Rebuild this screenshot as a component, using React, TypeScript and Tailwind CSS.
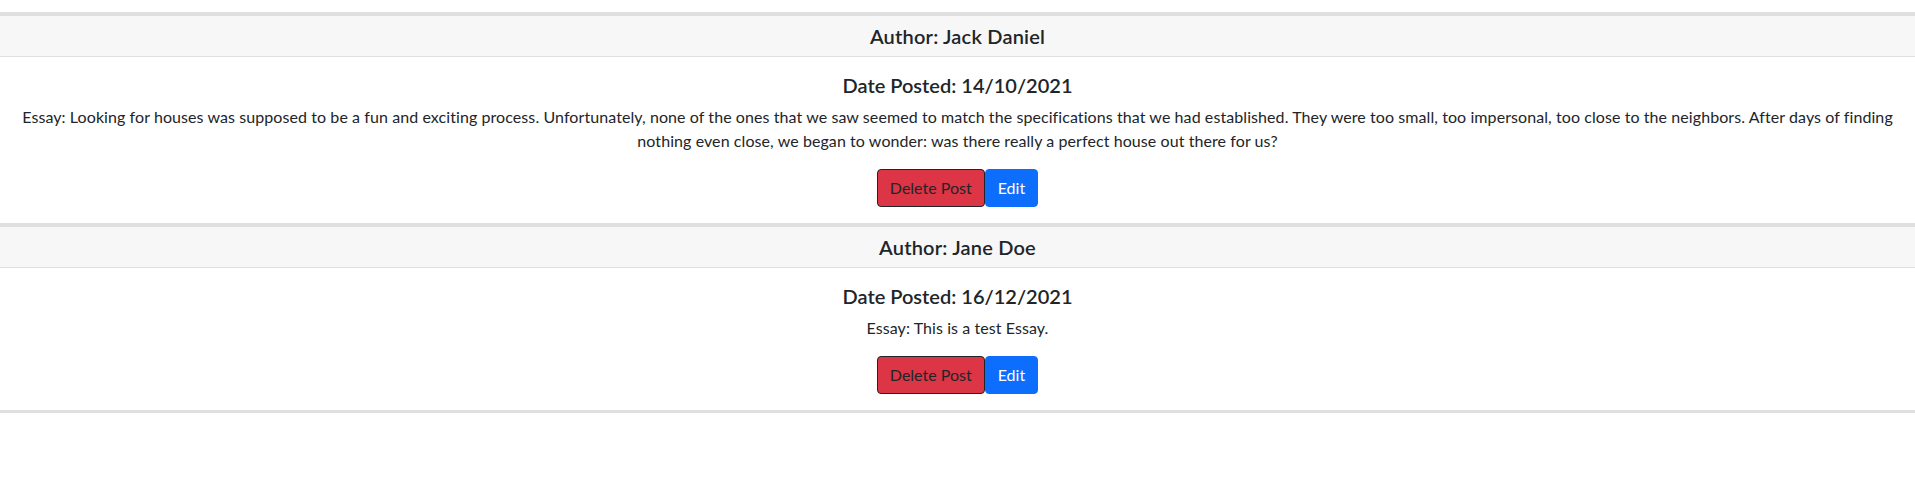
import React from "react";

type Post = { author: string; date: string; essay: string };

const posts: Post[] = [
  {
    author: "Jack Daniel",
    date: "14/10/2021",
    essay:
      "Looking for houses was supposed to be a fun and exciting process. Unfortunately, none of the ones that we saw seemed to match the specifications that we had established. They were too small, too impersonal, too close to the neighbors. After days of finding nothing even close, we began to wonder: was there really a perfect house out there for us?",
  },
  { author: "Jane Doe", date: "16/12/2021", essay: "This is a test Essay." },
];

export default function App() {
  return (
    <div className="min-h-screen bg-white pt-3 text-[#212529] font-['Lato',sans-serif]">
      <div className="border-b-[3px] border-[#dfdfdf]">
        {posts.map((p) => (
          <div key={p.author} className="border-t-4 border-[#dfdfdf] bg-white text-center">
            <div className="bg-[#f7f7f7] border-b border-[#dfdfdf] px-4 py-2">
              <h5 className="text-[20px] leading-[24px] font-semibold tracking-[0.2px]">Author: {p.author}</h5>
            </div>
            <div className="p-4">
              <h5 className="text-[20px] leading-[24px] font-semibold mb-2">Date Posted: {p.date}</h5>
              <p className="text-[16px] leading-[24px] tracking-[0.08px] mb-4">Essay: {p.essay}</p>
              <div className="flex justify-center">
                <button className="h-[38px] px-3 bg-[#dc3545] border border-[#212529] rounded text-[16px] text-[#212529]">
                  Delete Post
                </button>
                <button className="h-[38px] px-3 bg-[#0d6efd] border border-[#0d6efd] rounded text-[16px] text-white">
                  Edit
                </button>
              </div>
            </div>
          </div>
        ))}
      </div>
    </div>
  );
}
